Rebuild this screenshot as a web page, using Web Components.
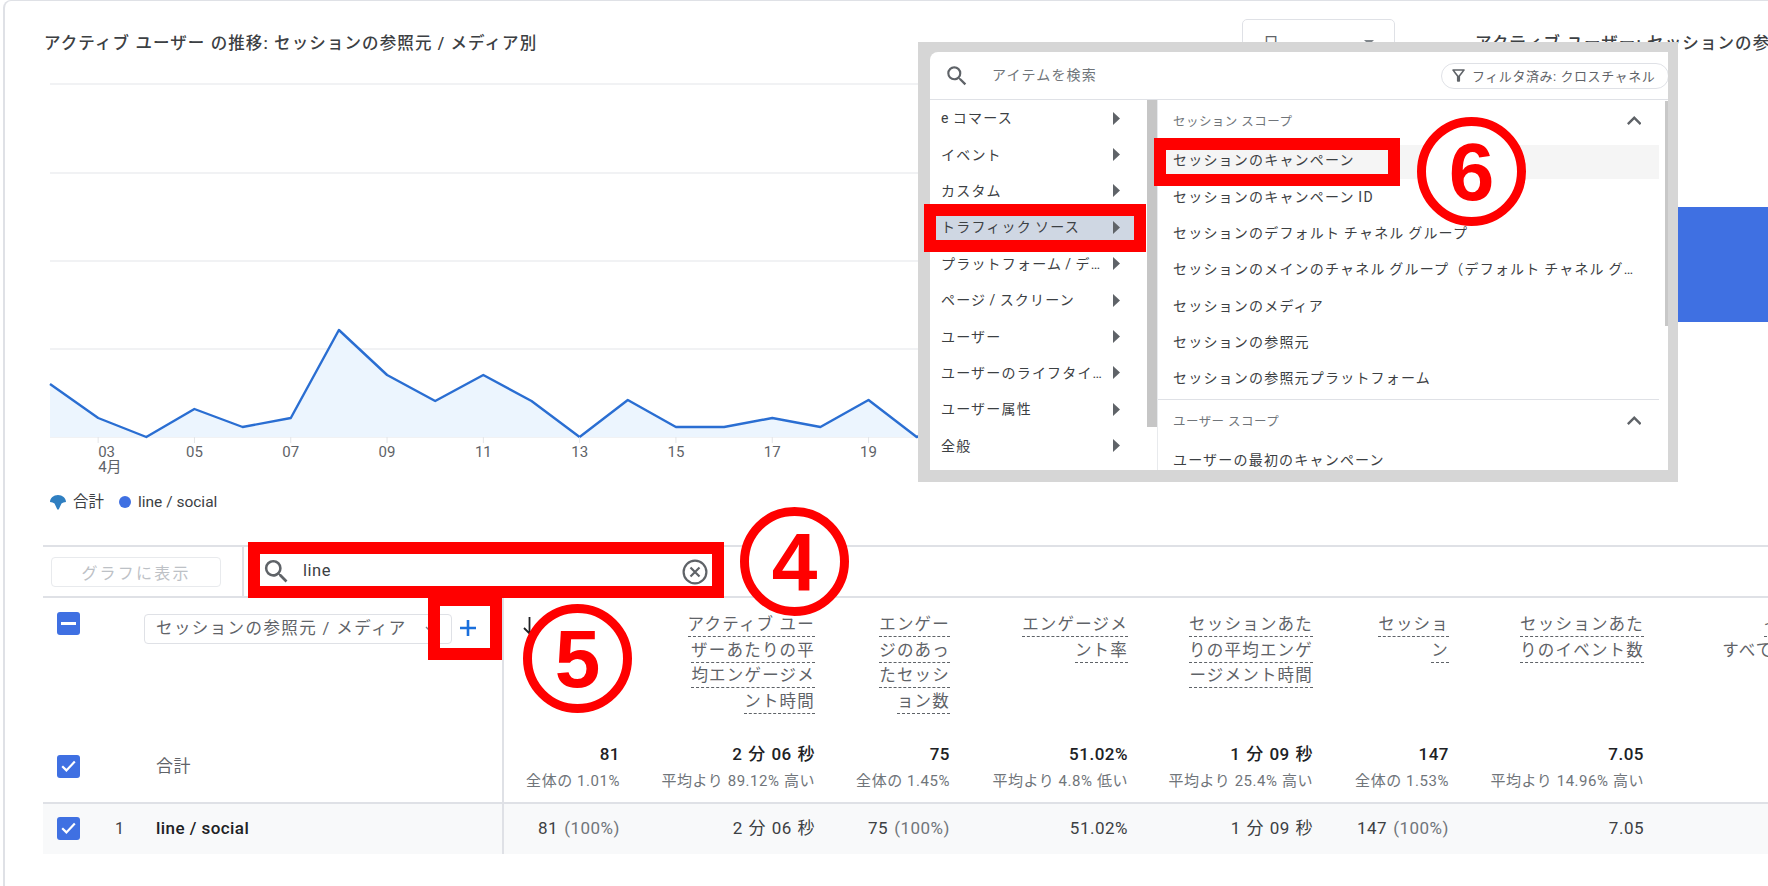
<!DOCTYPE html>
<html lang="ja">
<head>
<meta charset="utf-8">
<title>レポート</title>
<style>
  html, body { margin: 0; height: 100%; background: #fff; overflow: hidden; }
  body {
    font-family: Roboto, "Noto Sans CJK JP", sans-serif;
    color: #3c4043;
    --cols: 461px 115px 195px 135px 178px 185px 136px 195px 208px;
    --line: #dfe1e6;
    --blue: #3f70e2;
    --muted: #5f6368;
    --red: #ff0000;
  }
</style>
</head>
<body>

<ga-report>
  <ga-chart-panel slot="top">
    <ga-legend-item slot="legend" kind="total">合計</ga-legend-item>
    <ga-legend-item slot="legend">line / social</ga-legend-item>
  </ga-chart-panel>

  <ga-toolbar></ga-toolbar>

  <ga-table>
    <ga-row kind="head">
      <ga-dim-head></ga-dim-head>
      <ga-head-cell sort></ga-head-cell>
      <ga-head-cell>アクティブ ユー<br>ザーあたりの平<br>均エンゲージメ<br>ント時間</ga-head-cell>
      <ga-head-cell>エンゲー<br>ジのあっ<br>たセッシ<br>ョン数</ga-head-cell>
      <ga-head-cell>エンゲージメ<br>ント率</ga-head-cell>
      <ga-head-cell>セッションあた<br>りの平均エンゲ<br>ージメント時間</ga-head-cell>
      <ga-head-cell>セッショ<br>ン</ga-head-cell>
      <ga-head-cell>セッションあた<br>りのイベント数</ga-head-cell>
      <ga-head-cell note="すべてのイベント">イベント数</ga-head-cell>
    </ga-row>
    <ga-row kind="total">
      <ga-dim-cell label="合計"></ga-dim-cell>
      <ga-total-cell sub="全体の 1.01%">81</ga-total-cell>
      <ga-total-cell sub="平均より 89.12% 高い">2 分 06 秒</ga-total-cell>
      <ga-total-cell sub="全体の 1.45%">75</ga-total-cell>
      <ga-total-cell sub="平均より 4.8% 低い">51.02%</ga-total-cell>
      <ga-total-cell sub="平均より 25.4% 高い">1 分 09 秒</ga-total-cell>
      <ga-total-cell sub="全体の 1.53%">147</ga-total-cell>
      <ga-total-cell sub="平均より 14.96% 高い">7.05</ga-total-cell>
    </ga-row>
    <ga-row kind="item">
      <ga-dim-cell index="1" label="line / social"></ga-dim-cell>
      <ga-val-cell share="(100%)">81</ga-val-cell>
      <ga-val-cell>2 分 06 秒</ga-val-cell>
      <ga-val-cell share="(100%)">75</ga-val-cell>
      <ga-val-cell>51.02%</ga-val-cell>
      <ga-val-cell>1 分 09 秒</ga-val-cell>
      <ga-val-cell share="(100%)">147</ga-val-cell>
      <ga-val-cell>7.05</ga-val-cell>
    </ga-row>
  </ga-table>
</ga-report>

<ga-field-picker>
  <ga-menu-item slot="menu">e コマース</ga-menu-item>
  <ga-menu-item slot="menu">イベント</ga-menu-item>
  <ga-menu-item slot="menu">カスタム</ga-menu-item>
  <ga-menu-item slot="menu" active>トラフィック ソース</ga-menu-item>
  <ga-menu-item slot="menu">プラットフォーム / デバイス</ga-menu-item>
  <ga-menu-item slot="menu">ページ / スクリーン</ga-menu-item>
  <ga-menu-item slot="menu">ユーザー</ga-menu-item>
  <ga-menu-item slot="menu">ユーザーのライフタイム</ga-menu-item>
  <ga-menu-item slot="menu">ユーザー属性</ga-menu-item>
  <ga-menu-item slot="menu">全般</ga-menu-item>

  <ga-scope-head slot="fields">セッション スコープ</ga-scope-head>
  <ga-field-row slot="fields" hover>セッションのキャンペーン</ga-field-row>
  <ga-field-row slot="fields">セッションのキャンペーン ID</ga-field-row>
  <ga-field-row slot="fields">セッションのデフォルト チャネル グループ</ga-field-row>
  <ga-field-row slot="fields">セッションのメインのチャネル グループ（デフォルト チャネル グループ）</ga-field-row>
  <ga-field-row slot="fields">セッションのメディア</ga-field-row>
  <ga-field-row slot="fields">セッションの参照元</ga-field-row>
  <ga-field-row slot="fields">セッションの参照元プラットフォーム</ga-field-row>
  <ga-scope-head slot="fields" divided>ユーザー スコープ</ga-scope-head>
  <ga-field-row slot="fields">ユーザーの最初のキャンペーン</ga-field-row>
</ga-field-picker>

<ga-mark-box x="924" y="204" w="222" h="48"></ga-mark-box>
<ga-mark-box x="1154" y="138" w="246" h="48"></ga-mark-box>
<ga-mark-box x="248" y="542" w="476" h="56"></ga-mark-box>
<ga-mark-box x="428" y="594" w="74" h="66"></ga-mark-box>
<ga-mark-num x="740" y="507">4</ga-mark-num>
<ga-mark-num x="523" y="604">5</ga-mark-num>
<ga-mark-num x="1417" y="117">6</ga-mark-num>

<script>
const SEARCH_PATH = 'M15.5 14h-.79l-.28-.27A6.471 6.471 0 0 0 16 9.5 6.5 6.5 0 1 0 9.5 16c1.61 0 3.09-.59 4.23-1.57l.27.28v.79l5 4.99L20.49 19l-4.99-5zm-6 0C7.01 14 5 11.99 5 9.5S7.01 5 9.5 5 14 7.01 14 9.5 11.99 14 9.5 14z';

class Base extends HTMLElement {
  constructor() {
    super();
    this.attachShadow({ mode: 'open' });
  }
  connectedCallback() {
    this.shadowRoot.innerHTML = this.render();
  }
}

class GaReport extends Base {
  render() {
    return `
      <style>
        :host {
          display: flex;
          flex-direction: column;
          box-sizing: border-box;
          width: 1765px;
          height: 886px;
          margin-left: 3px;
          border-top: 1px solid var(--line);
          border-left: 2px solid var(--line);
          border-top-left-radius: 8px;
          overflow: hidden;
        }
      </style>
      <slot name="top"></slot>
      <slot></slot>`;
  }
}

class GaChartPanel extends Base {
  render() {
    const ys = [384, 418, 437, 409, 427, 418, 330, 375, 401, 375, 401, 437, 400, 427, 427, 418, 427, 400, 437, 420, 437];
    const pts = ys.map((y, i) => `${(50 + i * 48.15).toFixed(1)},${y}`);
    const last = (50 + (ys.length - 1) * 48.15).toFixed(1);
    const grid = [84, 173, 261, 349, 437].map(y =>
      `<line x1="50" x2="1230" y1="${y}" y2="${y}" stroke="#eceef1" stroke-width="1.6"/>`).join('');
    let ticks = '';
    for (let i = 1; i <= 17; i += 2) {
      const x = 50 + i * 48.15;
      // the first label sits beside its tick because the month goes under it
      const anchor = i === 1 ? 'start' : 'middle';
      ticks += `<line x1="${x}" x2="${x}" y1="437" y2="443" stroke="#e3e5e8"/>`;
      ticks += `<text x="${x}" y="457" text-anchor="${anchor}">${String(i + 2).padStart(2, '0')}</text>`;
    }
    return `
      <style>
        :host {
          display: flex;
          height: 544px;
          flex: none;
          box-sizing: border-box;
          padding: 31px 0 0 39px;
          overflow: hidden;
        }
        .left { width: 1198px; flex: none; }
        h2 {
          margin: 0;
          font-size: 16.5px;
          line-height: 24px;
          font-weight: 500;
          letter-spacing: 1.1px;
          color: #3c4043;
          white-space: nowrap;
        }
        svg.chart { display: block; margin: 0 0 0 -44px; }
        svg.chart text { font: 15px Roboto, "Noto Sans CJK JP", sans-serif; fill: #5f6368; }
        .legend { display: flex; gap: 15px; margin-left: 6px; height: 20px; margin-top: 12px; }
        ::slotted(ga-legend-item) { flex: none; }
        .range {
          flex: none;
          box-sizing: border-box;
          width: 153px;
          height: 40px;
          margin-top: -13px;
          border: 1.5px solid var(--line);
          border-radius: 5px;
          padding: 6px 20px 0;
          display: flex;
          align-items: center;
          justify-content: space-between;
          font-size: 16px;
          color: #5f6368;
        }
        .caret { width: 0; height: 0; border: 5px solid transparent; border-top-color: #80868b; border-bottom: 0; }
        .right { flex: none; margin-left: 80px; width: 293px; }
        .right h2 { overflow: hidden; }
        .bar { height: 115px; margin-top: 151px; background: var(--blue); }
      </style>
      <div class="left">
        <h2>アクティブ ユーザー の推移: セッションの参照元 / メディア別</h2>
        <svg class="chart" width="1242" height="424" viewBox="0 56 1242 424">
          ${grid}
          <polygon points="50,437 ${pts.join(' ')} ${last},437" fill="#ecf5fe"/>
          <polyline points="${pts.join(' ')}" fill="none" stroke="#2a6ed2" stroke-width="2.4" stroke-linejoin="round"/>
          ${ticks}
          <text x="98.2" y="472">4月</text>
        </svg>
        <div class="legend"><slot name="legend"></slot></div>
      </div>
      <div class="range"><span>日</span><span class="caret"></span></div>
      <div class="right">
        <h2>アクティブ ユーザー: セッションの参照元 / メディア別</h2>
        <div class="bar"></div>
      </div>`;
  }
}

class GaLegendItem extends Base {
  render() {
    const icon = this.getAttribute('kind') === 'total'
      ? `<svg width="16" height="15" viewBox="0 0 16 15"><path d="M0 7C0 3 3.6 0 8 0s8 3 8 7c-1.8.3-3.4.7-4.5 1.5L8.7 14.4H7.3L4.5 8.5C3.4 7.7 1.8 7.3 0 7z" fill="#2f7fc1"/></svg>`
      : `<span class="dot"></span>`;
    return `
      <style>
        :host { display: inline-flex; align-items: center; gap: 7px; font-size: 15.5px; line-height: 20px; color: #3c4043; }
        .dot { width: 12px; height: 12px; border-radius: 50%; background: var(--blue); }
      </style>
      ${icon}<slot></slot>`;
  }
}

class GaToolbar extends Base {
  render() {
    return `
      <style>
        :host {
          display: flex;
          align-items: center;
          flex: none;
          box-sizing: border-box;
          height: 53px;
          margin-left: 38px;
          padding-left: 8px;
          border-top: 2px solid var(--line);
          border-bottom: 2px solid var(--line);
        }
        button {
          box-sizing: border-box;
          width: 170px;
          height: 30px;
          padding: 0;
          border: 1.5px solid #e8eaed;
          border-radius: 4px;
          background: #fff;
          font: inherit;
          font-size: 16px;
          letter-spacing: 2.2px;
          color: #bdc1c6;
        }
        .sep { width: 2px; align-self: stretch; margin-left: 21px; background: var(--line); }
        .search { display: flex; align-items: center; margin-left: 15px; width: 449px; height: 32px; padding-left: 2px; box-sizing: border-box; }
        .search span { margin-left: 11px; font-size: 16.5px; letter-spacing: .5px; line-height: 24px; color: #3c4043; flex: 1; padding-bottom: 2px; }
        .search svg { flex: none; display: block; }
      </style>
      <button>グラフに表示</button>
      <div class="sep"></div>
      <div class="search">
        <svg width="31" height="31" viewBox="0 0 24 24"><path d="${SEARCH_PATH}" fill="#5f6368"/></svg>
        <span>line</span>
        <svg width="26" height="26" viewBox="0 0 26 26" fill="none" stroke="#5f6368" stroke-width="2.2"><circle cx="13" cy="13" r="11.4"/><path d="M8.5 8.5l9 9M17.5 8.5l-9 9"/></svg>
      </div>`;
  }
}

class GaTable extends Base {
  render() {
    return `<style>:host { display: block; margin-left: 38px; flex: none; }</style><slot></slot>`;
  }
}

class GaRow extends Base {
  render() {
    return `
      <style>
        :host { display: grid; grid-template-columns: var(--cols); width: max-content; }
        :host([kind="head"]) { height: 138px; }
        :host([kind="total"]) { height: 66px; }
        :host([kind="item"]) { height: 52px; background: #f8f9fa; box-shadow: inset 0 2px 0 var(--line); }
      </style>
      <slot></slot>`;
  }
}

const CHECK_STYLE = `
  .box { flex: none; box-sizing: border-box; width: 23px; height: 23px; border-radius: 3px; background: var(--blue); display: flex; align-items: center; justify-content: center; }
  .box svg { display: block; }
`;

class GaDimHead extends Base {
  render() {
    return `
      <style>
        :host { display: block; position: relative; box-sizing: border-box; border-right: 2px solid var(--line); padding: 14px 0 0 14px; }
        .line { display: flex; }
        ${CHECK_STYLE}
        .select {
          box-sizing: border-box;
          width: 308px;
          height: 30px;
          margin: 2px 0 0 64px;
          padding-left: 11px;
          border: 1.5px solid var(--line);
          border-radius: 4px;
          display: flex;
          align-items: center;
          gap: 18px;
          font-size: 16.5px;
          letter-spacing: 1.4px;
          line-height: 24px;
          color: #5f6368;
          white-space: nowrap;
        }
        .plus { margin: 8px 0 0 8px; display: block; }
      </style>
      <div class="line">
        <span class="box"><svg width="15" height="3"><rect width="15" height="3" fill="#fff"/></svg></span>
        <div class="select"><span>セッションの参照元 / メディア</span><svg width="9" height="6" viewBox="0 0 9 6"><path d="M1 1l3.5 3.5L8 1" fill="none" stroke="#80868b" stroke-width="1.4"/></svg></div>
        <svg class="plus" width="16" height="16" viewBox="0 0 16 16"><path d="M8 0v16M0 8h16" stroke="#1a6fdc" stroke-width="2.6"/></svg>
      </div>`;
  }
}

class GaDimCell extends Base {
  render() {
    const idx = this.getAttribute('index');
    return `
      <style>
        :host { display: flex; align-items: center; box-sizing: border-box; border-right: 2px solid var(--line); padding: 0 0 ${idx ? 0 : 6}px 14px; }
        ${CHECK_STYLE}
        .idx { width: 76px; flex: none; box-sizing: border-box; padding-left: 35px; font-size: 16px; color: #3c4043; }
        .label { font-size: 17px; line-height: 24px; color: ${idx ? '#202124' : '#5f6368'}; font-weight: ${idx ? 500 : 400}; letter-spacing: .45px; }
      </style>
      <span class="box"><svg width="15" height="12" viewBox="0 0 15 12"><path d="M1.2 6.2l4.2 4.2 8.4-8.8" fill="none" stroke="#fff" stroke-width="2.2"/></svg></span>
      <span class="idx">${idx || ''}</span>
      <span class="label">${this.getAttribute('label')}</span>`;
  }
}

class GaHeadCell extends Base {
  render() {
    const note = this.getAttribute('note');
    const sort = this.hasAttribute('sort');
    return `
      <style>
        :host { display: block; padding-top: 14px; margin-right: -1px; text-align: right; font-size: 16.5px; line-height: 25.7px; letter-spacing: 1.2px; color: #5f6368; white-space: nowrap; position: relative; }
        .t { border-bottom: 1px dashed #5f6368; padding-bottom: 2px; }
        .n { display: block; line-height: 26px; margin-right: -10px; }
        svg { position: absolute; left: 19px; top: 19px; display: block; }
      </style>
      ${sort ? `<svg width="13" height="18" viewBox="0 0 13 18"><path d="M6.5 0v16M1 11l5.500 5.500L12 11" fill="none" stroke="#202124" stroke-width="1.800"/></svg>` : `<span class="t"><slot></slot></span>`}
      ${note ? `<span class="n">${note}</span>` : ''}`;
  }
}

class GaTotalCell extends Base {
  render() {
    return `
      <style>
        :host { display: block; text-align: right; white-space: nowrap; margin-right: -1px; }
        .v { font-size: 17px; line-height: 24px; font-weight: 500; color: #202124; padding-top: 6px; letter-spacing: .5px; word-spacing: 1px; }
        .s { font-size: 15px; line-height: 20px; color: #70757a; margin-top: 5px; letter-spacing: .55px; }
      </style>
      <div class="v"><slot></slot></div>
      <div class="s">${this.getAttribute('sub')}</div>`;
  }
}

class GaValCell extends Base {
  render() {
    const share = this.getAttribute('share');
    return `
      <style>
        :host { display: flex; align-items: center; justify-content: flex-end; gap: 6px; margin-right: -1px; font-size: 17px; line-height: 24px; color: #3c4043; white-space: nowrap; letter-spacing: .5px; word-spacing: 1px; }
        span { display: block; height: 24px; }
        .p { color: #70757a; }
      </style>
      <span><slot></slot></span>${share ? `<span class="p">${share}</span>` : ''}`;
  }
}

class GaFieldPicker extends Base {
  render() {
    return `
      <style>
        :host {
          position: absolute;
          left: 918px;
          top: 42px;
          width: 760px;
          height: 440px;
          box-sizing: border-box;
          border-style: solid;
          border-color: #d6d6d6;
          border-width: 10px 10px 12px 12px;
          background: #d6d6d6;
          font-size: 14px;
          letter-spacing: 1.2px;
          color: #3c4043;
        }
        .sheet { height: 100%; display: flex; flex-direction: column; background: #fff; border-top-left-radius: 8px; overflow: hidden; }
        header { flex: none; box-sizing: border-box; height: 48px; display: flex; align-items: center; border-bottom: 1.500px solid var(--line); padding-left: 14px; }
        header svg { flex: none; display: block; }
        .ph { flex: 1; margin-left: 22px; padding-bottom: 3px; color: #70757a; }
        .chip { flex: none; box-sizing: border-box; width: 228px; height: 26px; margin-right: -1px; display: flex; align-items: center; gap: 4px; padding-left: 7px; border: 1.500px solid var(--line); border-right-width: 1.500px; border-radius: 13px; font-size: 13px; letter-spacing: .55px; color: #5f6368; white-space: nowrap; }
        .body { flex: 1; min-height: 0; display: flex; }
        .menu { flex: none; width: 216px; overflow: hidden; }
        .thumbcol { flex: none; width: 12px; box-sizing: border-box; padding-left: 1px; border-right: 1.500px solid #e8eaed; }
        .thumb { width: 10px; height: 327px; background: #c6c6c6; }
        .fields { flex: 1; min-width: 0; overflow: hidden; position: relative; }
        .bar { position: absolute; right: 0; top: 1px; width: 3px; height: 225px; background: #c8c8c8; }
      </style>
      <div class="sheet">
        <header>
          <svg width="26" height="26" viewBox="0 0 24 24"><path d="${SEARCH_PATH}" fill="#5f6368"/></svg>
          <span class="ph">アイテムを検索</span>
          <span class="chip">
            <svg width="19" height="19" viewBox="0 0 24 24"><path d="M7 6h10l-5.010 6.300L7 6zm-2.750-.390C6.270 8.200 10 13 10 13v6c0 .550.450 1 1 1h2c.550 0 1-.450 1-1v-6s3.720-4.800 5.740-7.390A.998.998 0 0 0 18.950 4H5.040c-.830 0-1.300.950-.790 1.610z" fill="#5f6368"/></svg>
            <span>フィルタ済み: クロスチャネル</span>
          </span>
        </header>
        <div class="body">
          <div class="menu"><slot name="menu"></slot></div>
          <div class="thumbcol"><div class="thumb"></div></div>
          <div class="fields"><slot name="fields"></slot><div class="bar"></div></div>
        </div>
      </div>`;
  }
}

class GaMenuItem extends Base {
  render() {
    return `
      <style>
        :host { display: flex; align-items: center; box-sizing: border-box; height: 36.400px; padding-left: 11px; word-spacing: -1.500px; }
        :host([active]) { background: #cfd7e3; }
        .t { width: 165px; flex: none; overflow: hidden; white-space: nowrap; text-overflow: ellipsis; line-height: 22px; }
        svg { margin-left: 7px; flex: none; display: block; }
      </style>
      <span class="t"><slot></slot></span>
      <svg width="7" height="13" viewBox="0 0 7 13"><path d="M0 0l7 6.500L0 13z" fill="#5f6368"/></svg>`;
  }
}

class GaScopeHead extends Base {
  render() {
    return `
      <style>
        :host { display: flex; align-items: center; justify-content: space-between; box-sizing: border-box; height: 42px; padding: 0 18px 2px 15px; margin-right: 9px; font-size: 12.500px; letter-spacing: .45px; color: #70757a; }
        :host([divided]) { margin-top: 3px; padding-bottom: 0; border-top: 1.500px solid var(--line); }
        svg { display: block; }
      </style>
      <span><slot></slot></span>
      <svg width="14.500" height="9" viewBox="6 8 12 7.410"><path d="M12 8l-6 6 1.410 1.410L12 10.830l4.590 4.580L18 14z" fill="#5f6368"/></svg>`;
  }
}

class GaFieldRow extends Base {
  render() {
    return `
      <style>
        :host { display: flex; align-items: center; box-sizing: border-box; height: 36.300px; padding: 0 14px 0 15px; margin-right: 9px; word-spacing: -1px; }
        :host([hover]) { height: 34px; margin-top: 2.600px; padding-bottom: 2.600px; background: #f5f5f5; }
        .t { overflow: hidden; white-space: nowrap; text-overflow: ellipsis; line-height: 22px; }
      </style>
      <span class="t"><slot></slot></span>`;
  }
}

class GaMarkBox extends Base {
  render() {
    const a = n => this.getAttribute(n);
    return `
      <style>
        :host {
          position: absolute;
          left: ${a('x')}px; top: ${a('y')}px; width: ${a('w')}px; height: ${a('h')}px;
          box-sizing: border-box;
          border: 12px solid var(--red);
        }
      </style>`;
  }
}

class GaMarkNum extends Base {
  render() {
    return `
      <style>
        :host {
          position: absolute;
          left: ${this.getAttribute('x')}px; top: ${this.getAttribute('y')}px;
          box-sizing: border-box;
          width: 109px; height: 109px;
          border: 9px solid var(--red);
          border-radius: 50%;
          background: #fff;
          display: flex; align-items: center; justify-content: center;
          font: bold 82px/1 "Liberation Sans", sans-serif;
          color: var(--red);
        }
      </style>
      <slot></slot>`;
  }
}

customElements.define('ga-report', GaReport);
customElements.define('ga-chart-panel', GaChartPanel);
customElements.define('ga-legend-item', GaLegendItem);
customElements.define('ga-toolbar', GaToolbar);
customElements.define('ga-table', GaTable);
customElements.define('ga-row', GaRow);
customElements.define('ga-dim-head', GaDimHead);
customElements.define('ga-dim-cell', GaDimCell);
customElements.define('ga-head-cell', GaHeadCell);
customElements.define('ga-total-cell', GaTotalCell);
customElements.define('ga-val-cell', GaValCell);
customElements.define('ga-field-picker', GaFieldPicker);
customElements.define('ga-menu-item', GaMenuItem);
customElements.define('ga-scope-head', GaScopeHead);
customElements.define('ga-field-row', GaFieldRow);
customElements.define('ga-mark-box', GaMarkBox);
customElements.define('ga-mark-num', GaMarkNum);
</script>
</body>
</html>
